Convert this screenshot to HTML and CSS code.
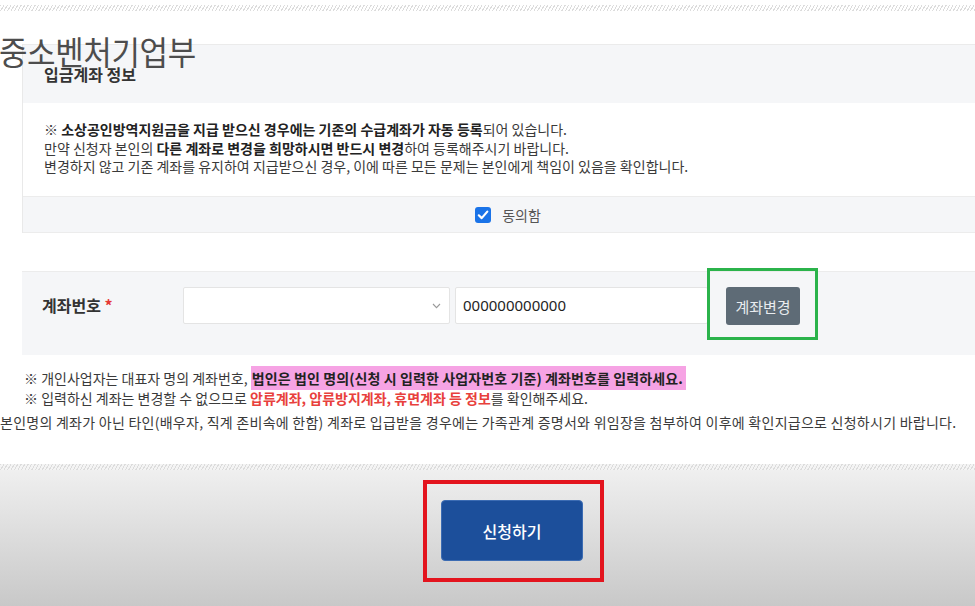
FILE: index.html
```html
<html>
  <head>
    <title>입금계좌 정보</title>
    <link rel="stylesheet" href="styles.css">
  </head>
  <body>
    <div class="topBand"><div class="hatch"></div></div>

    <div class="brand">중소벤처기업부</div>

    <div class="panel">
      <div class="panelHead">입금계좌 정보</div>
      <div class="panelBody">
        <p>※ <b>소상공인방역지원금을 지급 받으신 경우에는 기존의 수급계좌가 자동 등록</b>되어 있습니다.</p>
        <p>만약 신청자 본인의 <b>다른 계좌로 변경을 희망하시면 반드시 변경</b>하여 등록해주시기 바랍니다.</p>
        <p>변경하지 않고 기존 계좌를 유지하여 지급받으신 경우, 이에 따른 모든 문제는 본인에게 책임이 있음을 확인합니다.</p>
      </div>
      <div class="agreeRow">
        <span class="check">
          <svg width="16" height="16" viewBox="0 0 16 16"><path d="M3.8 8.3 L6.7 11.1 L12.3 4.6" fill="none" stroke="#fff" stroke-width="2.2" stroke-linecap="round" stroke-linejoin="round"/></svg>
        </span>
        <span class="agreeLabel">동의함</span>
      </div>
    </div>

    <div class="accountRow">
      <div class="fieldLabel">계좌번호 <span class="req">*</span></div>
      <div class="bankSelect">
        <svg width="9" height="6" viewBox="0 0 9 6"><path d="M1 1 L4.5 4.6 L8 1" fill="none" stroke="#9a9a9a" stroke-width="1.1"/></svg>
      </div>
      <div class="accountInput">000000000000</div>
      <div class="changeWrap">
        <button class="changeBtn">계좌변경</button>
        <div class="markGreen"></div>
      </div>
    </div>

    <div class="notes">
      <p class="indent">※ 개인사업자는 대표자 명의 계좌번호, <span class="hl">법인은 법인 명의(신청 시 입력한 사업자번호 기준) 계좌번호를 입력하세요.</span></p>
      <p class="indent">※ 입력하신 계좌는 변경할 수 없으므로 <span class="warn">압류계좌, 압류방지계좌, 휴면계좌 등 정보</span>를 확인해주세요.</p>
      <p class="last">본인명의 계좌가 아닌 타인(배우자, 직계 존비속에 한함) 계좌로 입급받을 경우에는 가족관계 증명서와 위임장을 첨부하여 이후에 확인지급으로 신청하시기 바랍니다.</p>
    </div>

    <div class="footer">
      <div class="hatch"></div>
      <div class="submitBox">
        <button class="submitBtn">신청하기</button>
      </div>
    </div>
  </body>
</html>
```

FILE: styles.css
```css
body {
  margin: 0;
  width: 975px;
  height: 606px;
  overflow: hidden;
  position: relative;
  background: #fff;
  font-family: "Noto Sans CJK KR", "Noto Sans", sans-serif;
  color: #333;
}
p {
  margin: 0;
}

.topBand {
  height: 44px;
  padding-top: 5px;
  box-sizing: border-box;
}
.hatch {
  height: 6px;
  background: repeating-linear-gradient(120deg, #dcdcdc 0 1px, transparent 1px 3px);
}

.brand {
  position: absolute;
  left: -1px;
  top: 28px;
  font-size: 31px;
  letter-spacing: -0.4px;
  color: #4d4d4d;
  transform: scaleY(1.05);
}

.panel {
  margin-left: 22px;
  width: 974px;
  border-left: 1px solid #e9e9e9;
}
.panelHead {
  height: 59px;
  box-sizing: border-box;
  padding: 20px 0 0 21px;
  background: #f5f6f8;
  border-top: 1px solid #ebebeb;
  font-size: 16px;
  font-weight: 700;
  color: #333;
  line-height: 18px;
}
.panelBody {
  height: 93px;
  box-sizing: border-box;
  padding: 17px 0 0 21px;
  font-size: 14px;
  line-height: 18.5px;
  color: #3a3a3a;
}
.panelBody b {
  color: #222;
}
.agreeRow {
  height: 37px;
  box-sizing: border-box;
  background: #f5f6f8;
  border-top: 1px solid #ececec;
  border-bottom: 1px solid #ececec;
  display: flex;
  align-items: center;
  justify-content: center;
  gap: 11px;
}
.check {
  width: 16px;
  height: 16px;
  border-radius: 3px;
  background: #1a73e8;
  display: flex;
  margin-left: -4px;
}
.agreeLabel {
  font-size: 14px;
  color: #555;
}

.accountRow {
  margin: 38px 0 0 22px;
  width: 974px;
  height: 84px;
  box-sizing: border-box;
  background: #f5f6f8;
  border-top: 1px solid #ececec;
  display: flex;
  align-items: flex-start;
  padding: 15px 0 0 20px;
}
.fieldLabel {
  width: 141px;
  font-size: 16px;
  font-weight: 700;
  line-height: 37px;
  color: #333;
}
.req {
  color: #e53935;
}
.bankSelect {
  width: 267px;
  height: 37px;
  box-sizing: border-box;
  background: #fff;
  border: 1px solid #e4e4e4;
  border-radius: 2px;
  display: flex;
  align-items: center;
  justify-content: flex-end;
  padding-right: 8px;
}
.accountInput {
  margin-left: 5px;
  width: 253px;
  height: 37px;
  box-sizing: border-box;
  background: #fff;
  border: 1px solid #e4e4e4;
  border-radius: 2px;
  padding-left: 7px;
  font-family: "Noto Sans", sans-serif;
  font-size: 15px;
  line-height: 35px;
  color: #1e1e1e;
}
.changeWrap {
  position: relative;
  margin-left: 18px;
}
.changeBtn {
  width: 74px;
  height: 38px;
  border: none;
  border-radius: 3px;
  background: #5e6b76;
  color: #e9ecef;
  font-family: "Noto Sans CJK KR", sans-serif;
  font-size: 15px;
  padding: 0;
  display: block;
}
.markGreen {
  position: absolute;
  left: -19px;
  top: -19px;
  width: 111px;
  height: 72px;
  box-sizing: border-box;
  border: 3px solid #2bb34b;
}

.notes {
  margin-top: 13px;
  font-size: 14px;
  color: #3a3a3a;
}
.notes p {
  line-height: 20px;
}
.indent {
  padding-left: 24px;
}
.hl {
  background: #f6a3e4;
  color: #222;
  font-weight: 700;
  padding: 2px 3px 2px 1px;
  letter-spacing: 0.1px;
}
.warn {
  color: #e8403c;
  font-weight: 700;
}
.notes .last {
  margin-top: 4px;
  letter-spacing: 0.26px;
}

.footer {
  margin-top: 32px;
  height: 150px;
  background: linear-gradient(#f1f1f1, #c6c6c6);
  display: flex;
  flex-direction: column;
  align-items: center;
}
.footer .hatch {
  align-self: stretch;
  background-color: #f4f4f4;
}
.submitBox {
  margin: 10px 0 0 52px;
  width: 181px;
  height: 102px;
  box-sizing: border-box;
  border: 4px solid #e3141e;
  padding: 16px 0 0 14px;
}
.submitBtn {
  width: 142px;
  height: 61px;
  border: 1px solid #3c6cb3;
  border-radius: 4px;
  background: #1c4f9b;
  color: #fff;
  font-family: "Noto Sans CJK KR", sans-serif;
  font-size: 16px;
  font-weight: 500;
  padding: 0;
  display: block;
}
```
